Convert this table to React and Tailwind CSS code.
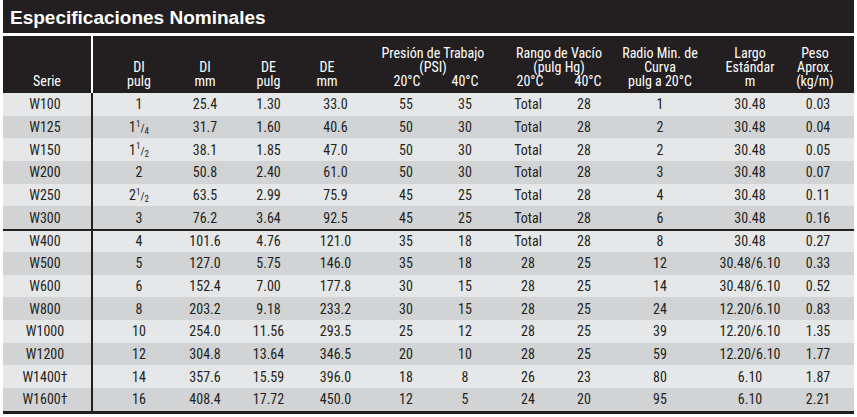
import React from 'react';

const DARK = 'bg-[#231f20]';
const cols = 'grid grid-cols-[90px_79px_64px_65px_69px_64px_62px_60px_66px_83px_79px_1fr]';

// per-column nudges so each value sits where the sheet has it
const pad = ['', 'pl-[13px]', 'pl-[2px]', '', '', 'pl-[8px]', '', 'pl-[4px]', 'pr-[10px]', 'pr-[7px]', 'pl-[11px]', 'pr-[2px]'];

const Frac = ({ whole, num, den }) => (
  <span>
    {whole}
    <sup className="text-[9px] top-[-0.6em]">{num}</sup>
    <span className="text-[11px]">/</span>
    <sub className="text-[9px]">{den}</sub>
  </span>
);

const rows = [
  ['W100', '1', '25.4', '1.30', '33.0', '55', '35', 'Total', '28', '1', '30.48', '0.03'],
  ['W125', <Frac whole="1" num="1" den="4" />, '31.7', '1.60', '40.6', '50', '30', 'Total', '28', '2', '30.48', '0.04'],
  ['W150', <Frac whole="1" num="1" den="2" />, '38.1', '1.85', '47.0', '50', '30', 'Total', '28', '2', '30.48', '0.05'],
  ['W200', '2', '50.8', '2.40', '61.0', '50', '30', 'Total', '28', '3', '30.48', '0.07'],
  ['W250', <Frac whole="2" num="1" den="2" />, '63.5', '2.99', '75.9', '45', '25', 'Total', '28', '4', '30.48', '0.11'],
  ['W300', '3', '76.2', '3.64', '92.5', '45', '25', 'Total', '28', '6', '30.48', '0.16'],
  ['W400', '4', '101.6', '4.76', '121.0', '35', '18', 'Total', '28', '8', '30.48', '0.27'],
  ['W500', '5', '127.0', '5.75', '146.0', '35', '18', '28', '25', '12', '30.48/6.10', '0.33'],
  ['W600', '6', '152.4', '7.00', '177.8', '30', '15', '28', '25', '14', '30.48/6.10', '0.52'],
  ['W800', '8', '203.2', '9.18', '233.2', '30', '15', '28', '25', '24', '12.20/6.10', '0.83'],
  ['W1000', '10', '254.0', '11.56', '293.5', '25', '12', '28', '25', '39', '12.20/6.10', '1.35'],
  ['W1200', '12', '304.8', '13.64', '346.5', '20', '10', '28', '25', '59', '12.20/6.10', '1.77'],
  ['W1400†', '14', '357.6', '15.59', '396.0', '18', '8', '26', '23', '80', '6.10', '1.87'],
  ['W1600†', '16', '408.4', '17.72', '450.0', '12', '5', '24', '20', '95', '6.10', '2.21'],
];

const HeadCell = ({ className = '', children }) => (
  <div className={`flex flex-col justify-end items-center text-center whitespace-nowrap pb-[5px] ${className}`}>{children}</div>
);

export default function App() {
  return (
    <div className="w-[857px] h-[417px] bg-white px-[3px] font-['Roboto_Condensed','Noto_Sans_Condensed','Noto_Sans',sans-serif] font-stretch-condensed text-[#231f20]">
      {/* Title bar */}
      <div className={`${DARK} h-[33px] flex items-center pl-[7px] pt-[2px]`}>
        <h1 className="font-['Liberation_Sans',Arial,sans-serif] font-stretch-normal font-bold text-[19px] text-white leading-none">
          Especificaciones Nominales
        </h1>
      </div>

      {/* Column headers */}
      <div className={`${cols} ${DARK} mt-[3px] h-[57px] text-white text-[14px] leading-[14px]`}>
        <HeadCell className="border-r-2 border-white">Serie</HeadCell>
        <HeadCell className={pad[1]}>
          <span>DI</span>
          <span>pulg</span>
        </HeadCell>
        <HeadCell className={pad[2]}>
          <span>DI</span>
          <span>mm</span>
        </HeadCell>
        <HeadCell>
          <span>DE</span>
          <span>pulg</span>
        </HeadCell>
        <HeadCell className="pr-[17px]">
          <span>DE</span>
          <span>mm</span>
        </HeadCell>
        <div className="col-span-2 flex flex-col justify-end pb-[5px] whitespace-nowrap">
          <span className="text-center">Presión de Trabajo</span>
          <span className="text-center">(PSI)</span>
          <div className="grid grid-cols-[64px_62px]">
            <span className="text-center pl-[10px]">20°C</span>
            <span className="text-center">40°C</span>
          </div>
        </div>
        <div className="col-span-2 flex flex-col justify-end pb-[5px] whitespace-nowrap">
          <span className="text-center">Rango de Vacío</span>
          <span className="text-center">(pulg Hg)</span>
          <div className="grid grid-cols-[60px_66px]">
            <span className="text-center pl-[8px]">20°C</span>
            <span className="text-center pr-[2px]">40°C</span>
          </div>
        </div>
        <HeadCell className={pad[9]}>
          <span>Radio Min. de</span>
          <span>Curva</span>
          <span>pulg a 20°C</span>
        </HeadCell>
        <HeadCell className={pad[10]}>
          <span>Largo</span>
          <span>Estándar</span>
          <span>m</span>
        </HeadCell>
        <HeadCell className="pr-[8px]">
          <span>Peso</span>
          <span>Aprox.</span>
          <span>(kg/m)</span>
        </HeadCell>
      </div>

      {/* Body */}
      <div className="border-b-[3px] border-[#231f20]">
        {rows.map((row, i) => (
          <div
            key={i}
            className={`${cols} h-[22.7px] text-[14px] leading-none ${i % 2 === 0 ? 'bg-[#e6e7e8]' : 'bg-[#d1d3d4]'} ${
              i === 6 ? 'border-t-2 border-[#231f20]' : ''
            }`}
          >
            {row.map((cell, j) => (
              <div
                key={j}
                className={`flex items-center justify-center whitespace-nowrap ${pad[j]} ${
                  j === 0 ? 'border-r-2 border-[#231f20] pr-[4px]' : ''
                }`}
              >
                {cell}
              </div>
            ))}
          </div>
        ))}
      </div>
    </div>
  );
}
